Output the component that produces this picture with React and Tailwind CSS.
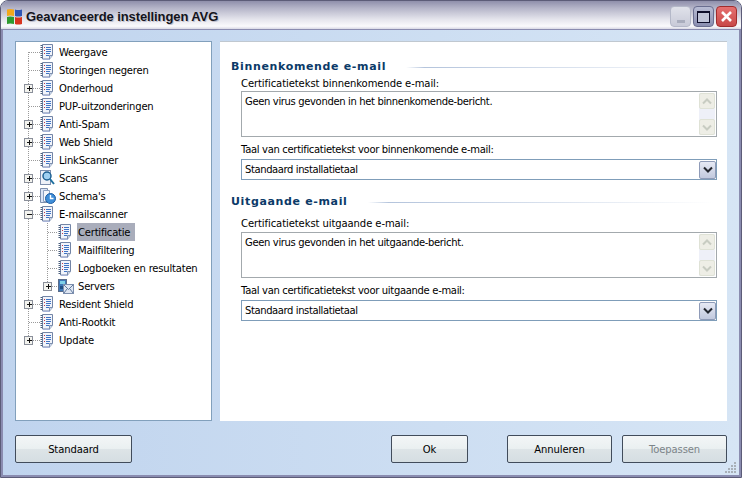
const FONT = "font-['DejaVu_Sans',Verdana,sans-serif]";

function DocIcon() {
  return (
    <svg width="14" height="16" viewBox="0 0 14 16" className="shrink-0">
      <path d="M2.5.5h10v11l-3 3.5h-7z" fill="#f1f4fb" stroke="#7385a6" />
      <path d="M.5 1.5h2M.5 3.5h2M.5 5.5h2M.5 7.5h2M.5 9.5h2M.5 11.5h2M.5 13.5h2" stroke="#4a5f7c" />
      <path d="M4 3.5h1M4 6.5h1M4 9.5h1" stroke="#c23a4a" />
      <path d="M6 3.5h5M6 5.5h5M6 7.5h5M6 9.5h4M6 11.5h3" stroke="#3f74c4" />
      <path d="M9.5 15v-3.5h3" fill="#c9d6ea" stroke="#7d8fae" />
      <path d="M3 15.5h7" stroke="#a8b4d8" />
    </svg>
  );
}

function ScanIcon() {
  return (
    <svg width="15" height="16" viewBox="0 0 15 16" className="shrink-0">
      <rect x=".5" y=".5" width="10" height="14" fill="#eef1f8" stroke="#7d8fae" />
      <circle cx="7" cy="6" r="4" fill="#9fd0f2" stroke="#1d5f92" strokeWidth="1.5" />
      <path d="M10 9l4 5" stroke="#1d6f9f" strokeWidth="2" />
    </svg>
  );
}

function ScheduleIcon() {
  return (
    <svg width="16" height="16" viewBox="0 0 16 16" className="shrink-0">
      <path d="M.5.5h7v14h-7z" fill="#dbe4f6" stroke="#7d8fae" />
      <path d="M3.5 2.5h6v11h-6z" fill="#f4f6fb" stroke="#8da0c0" />
      <circle cx="10.5" cy="10.5" r="5" fill="#3f8ed8" stroke="#1c5ca4" />
      <path d="M10.5 7v3.5h3" stroke="#fff" strokeWidth="1.4" fill="none" />
    </svg>
  );
}

function ServerIcon() {
  return (
    <svg width="16" height="15" viewBox="0 0 16 15" className="shrink-0">
      <rect x=".5" y=".5" width="8" height="12" fill="#3f78b8" stroke="#5a6c8a" />
      <rect x="2" y="2" width="5" height="3" fill="#7ed0e8" />
      <rect x="2" y="7" width="5" height="3" fill="#1d4e84" />
      <rect x="5.5" y="5.5" width="10" height="9" fill="#dfe6f2" stroke="#7d8fae" />
      <path d="M6 6l4.5 4.5L15 6M6 14l3-4M15 14l-3-4" stroke="#5f7a9e" fill="none" />
    </svg>
  );
}

function Gutter({ level, expander, last, first, childLast }) {
  const w = level === 0 ? 24 : 42;
  const x0 = 12.5;
  const x1 = 31.5;
  const dot = { stroke: "#9a9a9a", strokeDasharray: "1 1", shapeRendering: "crispEdges" };
  const bx = level === 0 ? x0 : x1;
  return (
    <svg width={w} height="18" viewBox={`0 0 ${w} 18`} className="shrink-0">
      <line x1={x0} x2={x0} y1={first ? 9 : 0} y2={last ? 9 : 18} style={dot} />
      {level === 1 && <line x1={x1} x2={x1} y1="0" y2={childLast ? 9 : 18} style={dot} />}
      <line x1={bx} x2={w} y1="9.5" y2="9.5" style={dot} />
      {expander && (
        <g>
          <rect x={bx - 4} y="5.5" width="8" height="8" fill="#f3f3ee" stroke="#8a8f9a" shapeRendering="crispEdges" />
          <path d={expander === "plus" ? `M${bx - 2} 9.5h5M${bx + 0.5 - 0} 7v5` : `M${bx - 2} 9.5h5`} stroke="#111" shapeRendering="crispEdges" />
        </g>
      )}
    </svg>
  );
}

const rows = [
  { t: "Weergave", first: true },
  { t: "Storingen negeren" },
  { t: "Onderhoud", e: "plus" },
  { t: "PUP-uitzonderingen" },
  { t: "Anti-Spam", e: "plus" },
  { t: "Web Shield", e: "plus" },
  { t: "LinkScanner" },
  { t: "Scans", e: "plus", i: "scan" },
  { t: "Schema's", e: "plus", i: "sched" },
  { t: "E-mailscanner", e: "minus" },
  { t: "Certificatie", l: 1, sel: true },
  { t: "Mailfiltering", l: 1 },
  { t: "Logboeken en resultaten", l: 1 },
  { t: "Servers", l: 1, e: "plus", i: "server", childLast: true },
  { t: "Resident Shield", e: "plus" },
  { t: "Anti-Rootkit" },
  { t: "Update", e: "plus", last: true },
];

function TreeRow({ r }) {
  const Icon = r.i === "scan" ? ScanIcon : r.i === "sched" ? ScheduleIcon : r.i === "server" ? ServerIcon : DocIcon;
  return (
    <div className="flex h-[18px] items-center">
      <Gutter level={r.l || 0} expander={r.e} first={r.first} last={r.last} childLast={r.childLast} />
      <div className={`flex shrink-0 items-center ${r.l ? "w-[19px]" : "w-[18px]"}`}><Icon /></div>
      <span className={`flex h-[18px] items-center pl-[1px] text-[10px] tracking-[-0.2px] whitespace-nowrap text-black ${r.sel ? "bg-[#a9adbb] pr-[5px]" : "pr-[1px]"}`}>{r.t}</span>
    </div>
  );
}

function ScrollArrow({ up }) {
  return (
    <div className="flex h-[16px] w-[16px] items-center justify-center rounded-[2px] border border-[#dfe2d6] bg-[#eeeee6]">
      <svg width="10" height="7" viewBox="0 0 10 7">
        <path d={up ? "M1 5.5l4-4 4 4" : "M1 1.5l4 4 4-4"} fill="none" stroke="#c8ccc2" strokeWidth="2" />
      </svg>
    </div>
  );
}

function TextBox({ text }) {
  return (
    <div className="flex h-[46px] border border-[#a3a9ad] bg-white">
      <div className="flex-1 px-[3px] py-[1px] text-[10px] leading-[17px] tracking-[-0.35px] text-black">{text}</div>
      <div className="m-[1px] flex w-[16px] flex-col justify-between bg-[#eef0f8]">
        <ScrollArrow up />
        <ScrollArrow />
      </div>
    </div>
  );
}

function Select() {
  return (
    <div className="flex h-[21px] items-center border border-[#7f9db9] bg-white pl-[1px]">
      <span className="flex-1 pl-[2px] text-[10px] tracking-[-0.4px] text-black">Standaard installatietaal</span>
      <div className="flex h-[18px] w-[17px] items-center justify-center rounded-[2px] border border-[#8f9bb8] bg-gradient-to-b from-[#e6e9f4] to-[#c2c9de]">
        <svg width="10" height="7" viewBox="0 0 10 7">
          <path d="M1 1.5l4 4 4-4" fill="none" stroke="#23262e" strokeWidth="2" />
        </svg>
      </div>
    </div>
  );
}

function Section({ title, boxLabel, text, selLabel, labelClass }) {
  return (
    <div className="flex flex-col">
      <div className="flex h-[15px] items-center gap-[20px]">
        <span className="text-[11px] font-bold tracking-[0.65px] whitespace-nowrap text-[#0b3a68]">{title}</span>
        <div className="mr-[3px] h-[1px] flex-1 bg-gradient-to-r from-[#ffffff] via-[#b4c4dc] via-[6%] to-white" />
      </div>
      <div className="ml-[10px] flex w-[476px] flex-col">
        <div className={`flex items-center text-[10px] tracking-[-0.08px] text-black ${labelClass}`}>{boxLabel}</div>
        <TextBox text={text} />
        <div className="mt-[3px] flex h-[19px] items-center text-[10px] tracking-[-0.32px] text-black">{selLabel}</div>
        <Select />
      </div>
    </div>
  );
}

function Btn({ children, className = "", disabled }) {
  return (
    <button className={`h-[28px] rounded-[2px] border border-[#414c5b] bg-[linear-gradient(#f3f6f7_0%,#eaf0f1_48%,#dde4e7_52%,#d5dee2_100%)] text-[10px] tracking-[-0.1px] ${disabled ? "text-[#7c8489]" : "text-black"} ${className}`}>
      {children}
    </button>
  );
}

function WinBtn({ className = "", children }) {
  return <div className={`flex h-[21px] w-[21px] items-center justify-center rounded-[4px] border ${className}`}>{children}</div>;
}

export default function App() {
  return (
    <div className={`${FONT} relative flex h-[478px] w-[742px] flex-col overflow-hidden rounded-t-[8px] border border-[#5c5c78] bg-[#c4d8f0]`}>
      <div className="flex h-[28px] shrink-0 items-center bg-[linear-gradient(#8f8fab_0%,#b4b4c8_25%,#e4e4ec_65%,#fafafc_90%,#d8d8e4_100%)] pt-[3px] pr-[4px] pl-[5px]">
        <svg width="17" height="17" viewBox="0 0 17 17" className="mr-[3px] shrink-0">
          <path d="M1 1.5 Q4 0.5 8 1.5V8Q4 7 1 8z" fill="#f2a81c" />
          <path d="M9 1.5 Q12 2.5 16 1.5V8Q12 9 9 8z" fill="#2f56b4" />
          <path d="M1 9Q4 8 8 9V16Q4 15 1 16z" fill="#2e9a2e" />
          <path d="M9 9Q12 10 16 9V16Q12 17 9 16z" fill="#d8341e" />
        </svg>
        <span className="flex-1 font-['Liberation_Sans',Arial,sans-serif] text-[13px] font-bold tracking-[-0.1px] whitespace-nowrap text-[#14141c] [text-shadow:1px_1px_0_#c0c0cc]">Geavanceerde instellingen AVG</span>
        <div className="flex items-center gap-[2px]">
          <WinBtn className="border-[#b4b8c8] bg-gradient-to-b from-[#e0e2ea] to-[#c8cad8]">
            <div className="mt-[9px] h-[3px] w-[8px] bg-[#a9adbd]" />
          </WinBtn>
          <WinBtn className="border-[#6a6e90] bg-gradient-to-b from-[#b8bcd4] to-[#8a8eb0]">
            <div className="h-[12px] w-[13px] border border-t-[2px] border-[#0d0d2a] bg-[#c0c4d8]" />
          </WinBtn>
          <WinBtn className="border-[#a02c2c] bg-gradient-to-b from-[#e67070] to-[#c84848]">
            <svg width="13" height="13" viewBox="0 0 13 13"><path d="M2 2l9 9M11 2l-9 9" stroke="#fff" strokeWidth="2.6" /></svg>
          </WinBtn>
        </div>
      </div>
      <div className="flex flex-1 flex-col border-x-[2px] border-b-[2px] border-t border-[#8a8cb0] bg-[linear-gradient(90deg,#c0d4ee,#d6e5f5)] pt-[11px] pr-[12px] pb-[12px] pl-[12px]">
        <div className="flex h-[380px] gap-[8px]">
          <div className="w-[197px] shrink-0 border border-[#82a0bc] bg-white pt-[1px]">
            {rows.map((r) => <TreeRow key={r.t} r={r} />)}
          </div>
          <div className="flex flex-1 flex-col gap-[15px] border-t border-t-[#c0c8d0] bg-white pt-[18px] pr-[10px] pl-[11px]">
            <Section labelClass="h-[16px]" title="Binnenkomende e-mail" boxLabel="Certificatietekst binnenkomende e-mail:" text="Geen virus gevonden in het binnenkomende-bericht." selLabel="Taal van certificatietekst voor binnenkomende e-mail:" />
            <Section labelClass="h-[22px] pt-[5px]" title="Uitgaande e-mail" boxLabel="Certificatietekst uitgaande e-mail:" text="Geen virus gevonden in het uitgaande-bericht." selLabel="Taal van certificatietekst voor uitgaande e-mail:" />
          </div>
        </div>
        <div className="mt-[14px] flex">
          <Btn className="w-[117px]">Standaard</Btn>
          <Btn className="ml-auto w-[77px]">Ok</Btn>
          <Btn className="ml-[39px] w-[105px]">Annuleren</Btn>
          <Btn className="ml-[10px] w-[105px]" disabled>Toepassen</Btn>
        </div>
      </div>
      <svg width="12" height="12" viewBox="0 0 12 12" className="absolute right-[4px] bottom-[4px]">
        <path d="M9 1h2v2H9zM6 4h2v2H6zM9 4h2v2H9zM3 7h2v2H3zM6 7h2v2H6zM9 7h2v2H9zM0 10h2v2H0zM3 10h2v2H3zM6 10h2v2H6zM9 10h2v2H9z" fill="#a8b0b8" />
      </svg>
    </div>
  );
}
